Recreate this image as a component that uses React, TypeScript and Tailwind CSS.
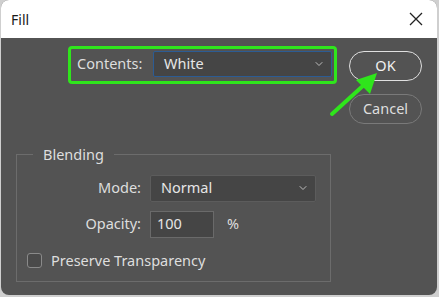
import { ChevronDown } from "lucide-react";

const font = { fontFamily: '"Noto Sans", "Open Sans", sans-serif' };

function Select({ value, className }: { value: string; className: string }) {
  return (
    <div
      className={`flex items-center justify-between rounded-[2px] bg-[#454545] pl-[10px] pr-[6px] text-[14.5px] text-[#e6e6e6] ${className}`}
    >
      <span>{value}</span>
      <ChevronDown className="h-3 w-3 text-[#bdbdbd]" strokeWidth={2} />
    </div>
  );
}

export default function App() {
  return (
    <div className="h-[297px] w-[439px] bg-[#cfcfcf] pl-[1px]" style={font}>
      <div className="relative h-[295px] w-[436px] overflow-hidden rounded-[8px] bg-[#535353]">
        {/* title bar */}
        <div className="flex h-[38px] items-center justify-between bg-white pl-[10px] pr-[14px]">
          <span className="text-[14px] text-[#1a1a1a]">Fill</span>
          <svg width="14" height="14" viewBox="0 0 14 14" className="text-[#222]">
            <path d="M1 1 L13 13 M13 1 L1 13" stroke="currentColor" strokeWidth="1.3" />
          </svg>
        </div>

        <div className="flex">
          <div className="w-[348px]">
            {/* contents row */}
            <div className="pl-[67px] pt-[8px]">
              <div className="flex h-[38px] w-[269px] items-center rounded-[4px] border-[3px] border-[#2fe51c] pb-[2px] pl-[6px]">
                <span className="w-[76px] text-[14.5px] text-[#dedede]">Contents:</span>
                <Select
                  value="White"
                  className="h-[26px] w-[179px] border border-[#2c5c94]"
                />
              </div>
            </div>

            {/* blending group */}
            <fieldset className="mt-[60px] ml-[15px] h-[138px] w-[315px] border border-[#6c6c6c] pl-0">
              <legend className="ml-[16px] px-[10px] text-[14.5px] text-[#dedede]">Blending</legend>
              <div className="mt-[9px] grid grid-cols-[124px_auto] items-center gap-x-[9px] gap-y-[9px]">
                <span className="text-right text-[14.5px] text-[#dedede]">Mode:</span>
                <Select
                  value="Normal"
                  className="h-[27px] w-[166px] border border-[#5c5c5c]"
                />
                <span className="text-right text-[14.5px] text-[#dedede]">Opacity:</span>
                <div className="flex items-center">
                  <div className="flex h-[27px] w-[64px] items-center border border-[#6a6a6a] bg-[#454545] pl-[6px] text-[14.5px] text-[#e6e6e6]">
                    100
                  </div>
                  <span className="ml-[13px] text-[14.5px] text-[#dedede]">%</span>
                </div>
              </div>
              <label className="mt-[12px] ml-[10px] flex items-center gap-[9px] text-[14.5px] text-[#dedede]">
                <span className="h-[15px] w-[15px] rounded-[3px] border border-[#8a8a8a] bg-[#4a4a4a]" />
                Preserve Transparency
              </label>
            </fieldset>
          </div>

          {/* buttons */}
          <div className="flex flex-col gap-[13px] pt-[13px]">
            <button className="h-[30px] w-[73px] rounded-full border border-[#e0e0e0] text-[14.5px] text-[#f0f0f0]">
              OK
            </button>
            <button className="h-[30px] w-[73px] rounded-full border border-[#7a7a7a] text-[14.5px] text-[#dedede]">
              Cancel
            </button>
          </div>
        </div>

        {/* green arrow callout */}
        <svg
          className="absolute left-0 top-0"
          width="436"
          height="295"
          viewBox="0 0 436 295"
        >
          <line x1="331" y1="114" x2="364" y2="84" stroke="#2fe51c" strokeWidth="4" strokeLinecap="round" />
          <polygon points="376,73 355,80 369,94" fill="#2fe51c" />
        </svg>
      </div>
    </div>
  );
}
